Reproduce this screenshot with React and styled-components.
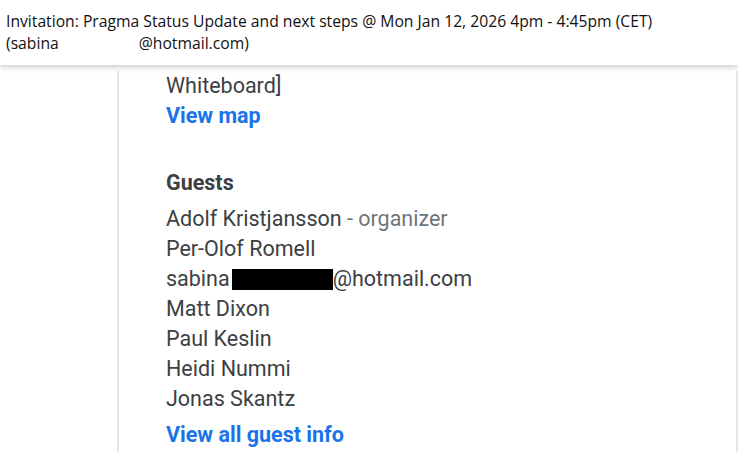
import React from "react";
import styled, { createGlobalStyle } from "styled-components";

const GlobalStyle = createGlobalStyle`
  html, body {
    margin: 0;
    padding: 0;
    background: #ffffff;
    overflow: hidden;
  }
`;

const Page = styled.div`
  width: 738px;
  height: 452px;
  display: flex;
  flex-direction: column;
  background: #ffffff;
`;

const Header = styled.div`
  height: 65px;
  padding: 10px 6px 0;
  box-sizing: border-box;
  font-family: "Open Sans", "Noto Sans", sans-serif;
  font-size: 15.7px;
  line-height: 22px;
  color: #111111;
  box-shadow: 0 2px 6px rgba(0, 0, 0, 0.22);
  position: relative;
  z-index: 1;
  background: #ffffff;
`;

const Blank = styled.span`
  display: inline-block;
  width: ${(p) => p.w}px;
`;

const Body = styled.div`
  flex: 1;
  padding: 6px 0 0 117px;
  display: flex;
`;

const Column = styled.div`
  width: 587px;
  border-left: 2px solid #e6e6e6;
  border-right: 2px solid #e6e6e6;
  padding: 0 0 0 47px;
  font-family: Roboto, "Liberation Sans", sans-serif;
  font-size: 21.5px;
  color: #3c4043;
`;

const Line = styled.div`
  height: 30px;
  line-height: 30px;
  white-space: nowrap;
`;

const Link = styled.a`
  display: block;
  height: 30px;
  line-height: 30px;
  color: #1a73e8;
  font-weight: 700;
  text-decoration: none;
  margin-top: ${(p) => p.top || 0}px;
`;

const Heading = styled.div`
  margin-top: 35px;
  height: 34px;
  line-height: 34px;
  font-weight: 700;
  margin-bottom: 4px;
`;

const Muted = styled.span`
  color: #70757a;
`;

const Redact = styled.span`
  display: inline-block;
  width: 101px;
  height: 21px;
  background: #000;
  vertical-align: -4px;
  margin-left: 2px;
`;

const guests = ["Per-Olof Romell"];
const more = ["Matt Dixon", "Paul Keslin", "Heidi Nummi", "Jonas Skantz"];

export default function App() {
  return (
    <Page>
      <GlobalStyle />
      <Header>
        <div>Invitation: Pragma Status Update and next steps @ Mon Jan 12, 2026 4pm - 4:45pm (CET)</div>
        <div>
          (sabina<Blank w={80} />@hotmail.com)
        </div>
      </Header>
      <Body>
        <Column>
          <Line>Whiteboard]</Line>
          <Link href="#">View map</Link>
          <Heading>Guests</Heading>
          <Line>
            Adolf Kristjansson <Muted>- organizer</Muted>
          </Line>
          {guests.map((g) => (
            <Line key={g}>{g}</Line>
          ))}
          <Line>
            sabina<Redact />@hotmail.com
          </Line>
          {more.map((g) => (
            <Line key={g}>{g}</Line>
          ))}
          <Link href="#" top={6}>View all guest info</Link>
        </Column>
      </Body>
    </Page>
  );
}
